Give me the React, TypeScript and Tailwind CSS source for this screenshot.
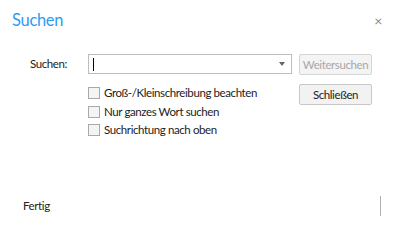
import React from "react";

export default function App() {
  const font = { fontFamily: 'Lato, "Noto Sans", sans-serif' };
  return (
    <div className="w-[400px] h-[232px] bg-white relative text-[11.5px] tracking-[-0.4px] text-[#222]" style={font}>
      <div className="flex items-start justify-between pl-[12px] pr-[18px] pt-[8px]">
        <div className="text-[16.5px] tracking-[-0.3px] leading-[24px] text-[#2f9bef]">Suchen</div>
        <div className="pt-[6px] text-[#888] text-[14px] leading-[14px]">×</div>
      </div>
      <div className="flex pt-[22px]">
        <div className="w-[88px] pl-[30px] leading-[20px]">Suchen:</div>
        <div className="flex flex-col">
          <div className="flex gap-[7px]">
            <div className="w-[204px] h-[20px] border border-[#bdbdbd] flex items-center pl-[4px] pr-[6px]">
              <div className="w-[1px] h-[13px] bg-black" />
              <div className="flex-1" />
              <div className="w-0 h-0 border-l-[3px] border-r-[3px] border-t-[4px] border-l-transparent border-r-transparent border-t-[#666]" />
            </div>
            <div className="w-[73px] h-[21px] border border-[#d5d5d5] rounded-[2px] bg-[#f4f4f4] text-[#a8a8a8] flex items-center justify-center">Weitersuchen</div>
          </div>
          <div className="flex gap-[7px] mt-[9px]">
            <div className="w-[204px] flex flex-col gap-[6.5px] pt-[3px]">
              {["Groß-/Kleinschreibung beachten", "Nur ganzes Wort suchen", "Suchrichtung nach oben"].map((t) => (
                <div key={t} className="flex items-center gap-[4px] h-[12px]">
                  <div className="w-[12px] h-[12px] border border-[#a8a8a8] bg-[#f4f4f4]" />
                  <span className="leading-[12px]">{t}</span>
                </div>
              ))}
            </div>
            <div className="w-[73px] h-[21px] border border-[#c8c8c8] rounded-[2px] bg-[#f2f2f2] flex items-center justify-center">Schließen</div>
          </div>
        </div>
      </div>
      <div className="absolute left-0 right-0 bottom-[16px] flex items-center justify-between pl-[23px] pr-[19px]">
        <span className="leading-[20px]">Fertig</span>
        <div className="w-[1px] h-[20px] bg-[#b0b0b0]" />
      </div>
    </div>
  );
}
